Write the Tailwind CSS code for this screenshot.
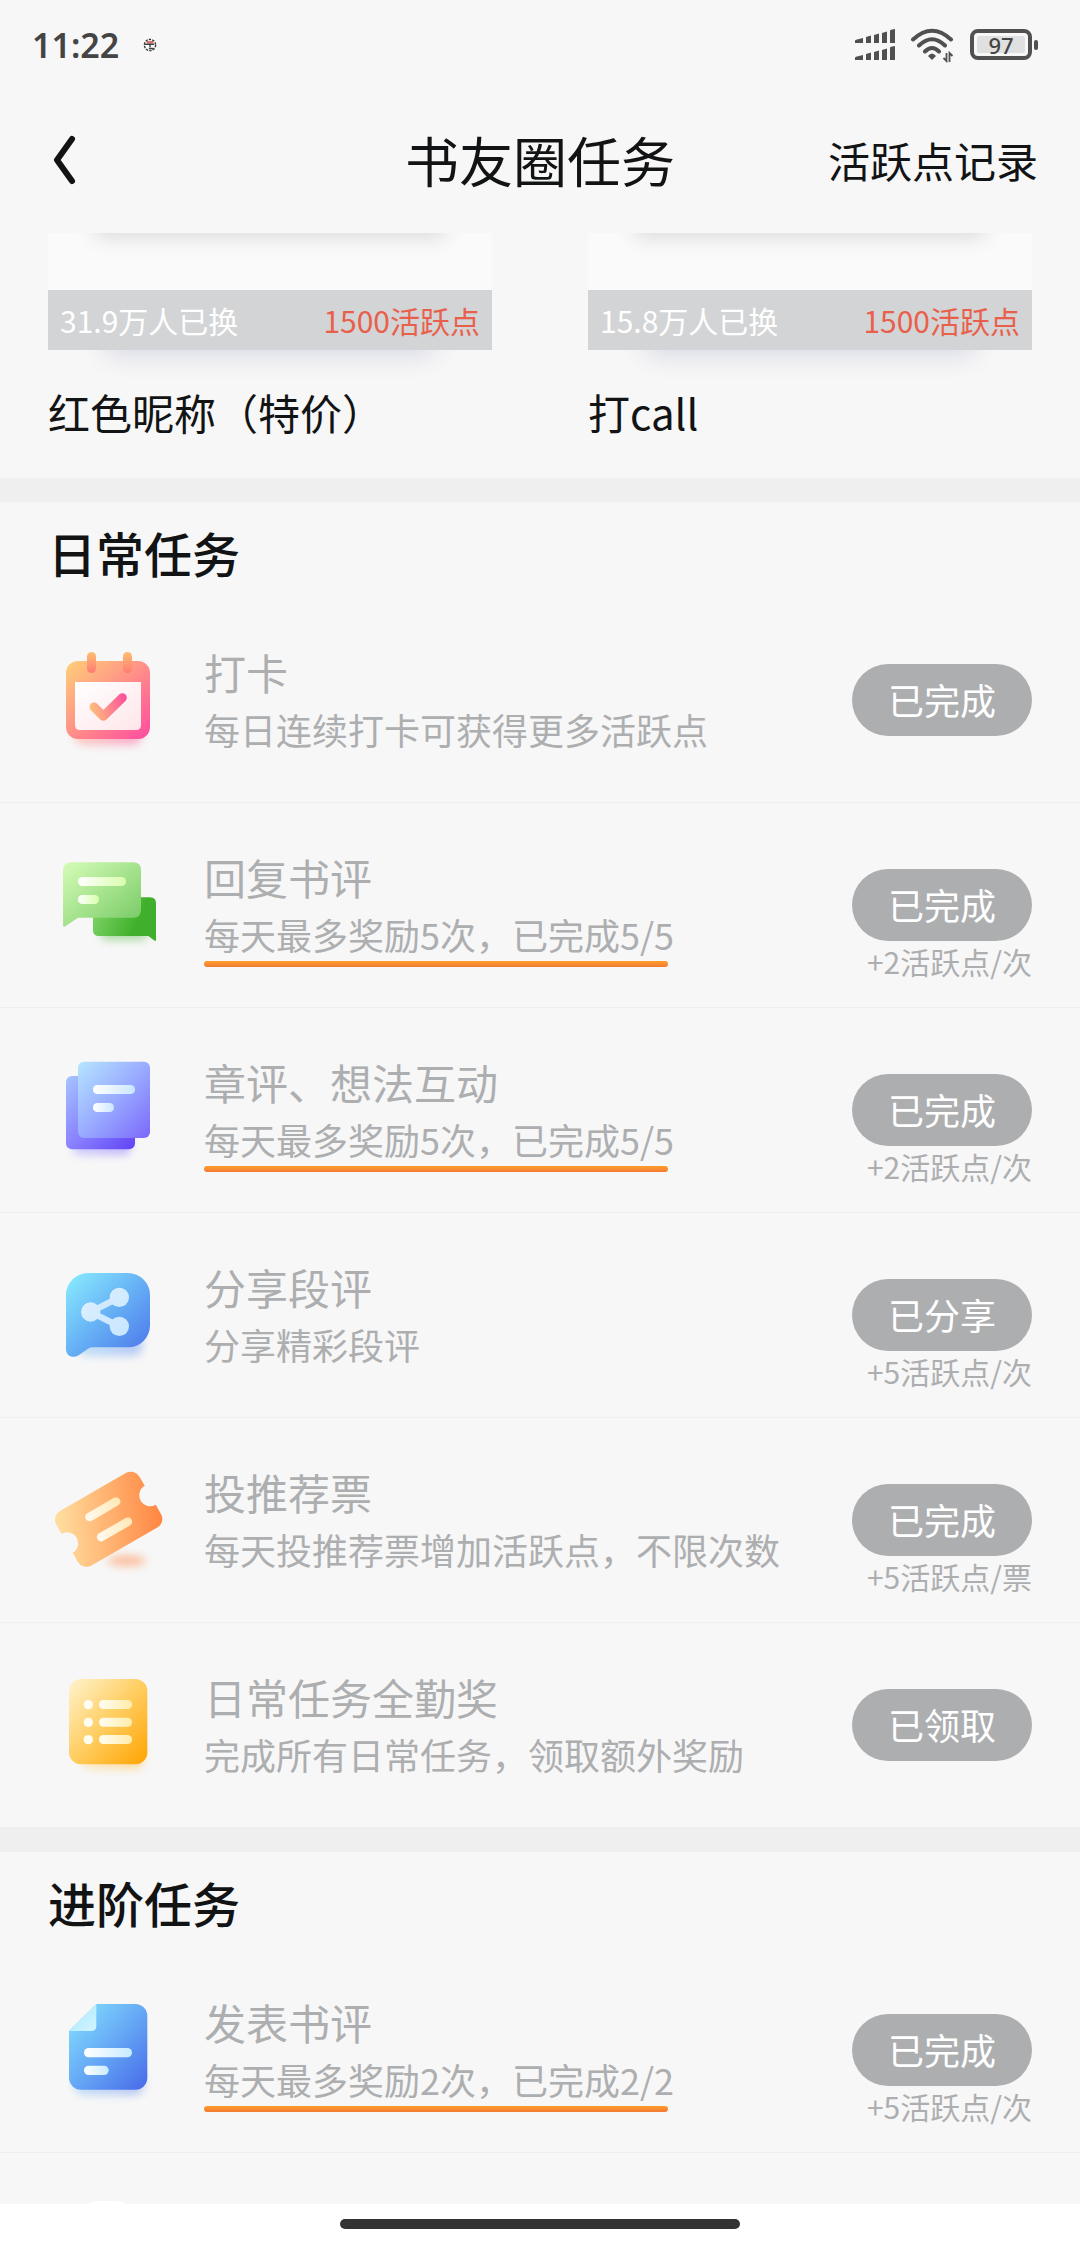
<!DOCTYPE html>
<html lang="zh-CN">
<head>
    <meta charset="UTF-8">
    <meta name="viewport" content="width=device-width, initial-scale=1.0">
    <title>书友圈任务</title>
    <script src="https://cdn.jsdelivr.net/npm/@tailwindcss/browser@4"></script>
</head>
<body class="h-screen flex flex-col overflow-hidden bg-[#f7f7f7] text-[#121314] font-['Noto_Sans_CJK_SC',sans-serif]">

    <!-- 状态栏 -->
    <div class="h-[89px] shrink-0 flex items-center justify-between pl-8 pr-[42px] text-[#444]">
        <div class="flex items-center gap-6">
            <span class="text-[34px] leading-none font-semibold font-['Noto_Sans',sans-serif]">11:22</span>
            <svg class="w-3.5 h-3.5" viewBox="0 0 12 12" aria-hidden="true">
                <circle cx="6" cy="6" r="4.800" fill="#fff" stroke="#333" stroke-width="1.200" stroke-dasharray="2 1"/>
                <path d="M3 2.500h6v3H3z" fill="#c77"/>
                <path d="M1.500 5.500h8M6 5v3M5 9h4" stroke="#344" stroke-width="1.200" fill="none"/>
            </svg>
        </div>
        <div class="flex items-center gap-4">
            <svg class="w-10 h-8" viewBox="0 0 40 32" fill="#505050" aria-hidden="true">
                <path id="sig" d="M0 12q0-1 1-1.300L8 9v5H0zM11 8l5-1.400V14h-5zM19 6l5-1.400V14h-5zM27 4l5-1.400V14h-5zM35 2q0-1 1-1.200L40 0v14h-5z"/>
                <use href="#sig" y="17"/>
            </svg>
            <svg class="w-[43px] h-9" viewBox="0 0 43 36" fill="none" stroke="#505050" stroke-width="4" aria-hidden="true">
                <path d="M2 12.500Q21 -5 40 12.500M8 18.500Q21 6 34 18.500M14 24.500Q21 17.500 28 24.500" stroke-linecap="round"/>
                <path d="M21 33l-4-4q4-5 8 0z" fill="#505050" stroke="none"/>
                <path d="M35.500 26v8l-3-3M38.500 35v-9l3 3" stroke-width="1.800"/>
            </svg>
            <div class="flex items-center gap-0.5">
                <div class="w-[62px] h-[31px] rounded-lg border-4 border-[#505050] p-[3px]">
                    <div class="h-full rounded-xs bg-[#e0e0e0] flex items-center justify-center text-[22px] leading-none font-medium font-['Noto_Sans',sans-serif]">97</div>
                </div>
                <div class="w-1 h-[10px] rounded-xs bg-[#505050]"></div>
            </div>
        </div>
    </div>

    <!-- 导航栏 -->
    <header class="h-36 shrink-0 grid grid-cols-[1fr_auto_1fr] items-center px-[42px] pb-0.5">
        <button class="justify-self-start pl-2.5" aria-label="返回">
            <svg class="w-6 h-[50px]" viewBox="0 0 24 50" fill="none" stroke="#121314" stroke-width="6" stroke-linecap="round" stroke-linejoin="round"><path d="M20 4L5 25L20 46"/></svg>
        </button>
        <h1 class="text-[54px] leading-[72px]">书友圈任务</h1>
        <a href="#" class="justify-self-end text-[42px] leading-[72px]">活跃点记录</a>
    </header>

    <main class="flex-1 min-h-0 overflow-hidden">

        <!-- 兑换商品 -->
        <section class="grid grid-cols-2 gap-24 px-12 h-[245px]">
            <div>
                <div class="relative">
                    <div class="absolute inset-x-14 bottom-0 h-8 rounded-xl shadow-[0_6px_24px_#d9dae6]"></div>
                    <div class="relative h-[57px] bg-[#fafafa] overflow-hidden">
                        <div class="absolute inset-x-12 -top-6 h-6 shadow-[0_4px_20px_#d9d9d9]"></div>
                    </div>
                    <div class="relative h-[60px] px-3 flex items-center justify-between bg-[#d3d4d5] text-[30px]">
                        <span class="text-white">31.9万人已换</span>
                        <span class="text-[#e8604c]">1500活跃点</span>
                    </div>
                </div>
                <h3 class="mt-8 text-[42px] leading-[60px] whitespace-nowrap">红色昵称（特价）</h3>
            </div>
            <div>
                <div class="relative">
                    <div class="absolute inset-x-14 bottom-0 h-8 rounded-xl shadow-[0_6px_24px_#d9dae6]"></div>
                    <div class="relative h-[57px] bg-[#fafafa] overflow-hidden">
                        <div class="absolute inset-x-12 -top-6 h-6 shadow-[0_4px_20px_#d9d9d9]"></div>
                    </div>
                    <div class="relative h-[60px] px-3 flex items-center justify-between bg-[#d3d4d5] text-[30px]">
                        <span class="text-white">15.8万人已换</span>
                        <span class="text-[#e8604c]">1500活跃点</span>
                    </div>
                </div>
                <h3 class="mt-8 text-[42px] leading-[60px] whitespace-nowrap">打call</h3>
            </div>
        </section>

        <!-- 日常任务 -->
        <section class="border-t-[24px] border-[#efefef]">
            <h2 class="h-24 px-12 pt-[14px] text-[48px] leading-[72px] font-medium">日常任务</h2>
            <ul class="text-[#adaeb0]">
                <li class="h-[205px] flex items-start border-b border-[#efefef] pl-[54px] pr-12">
                    <svg class="w-[108px] h-[108px] mt-12 mr-[42px] shrink-0 overflow-visible" viewBox="0 0 324 324" aria-hidden="true">
                        <defs>
                            <linearGradient id="cal" x1="0" y1="0" x2="1" y2="1"><stop offset="0" stop-color="#ffd078"/><stop offset=".5" stop-color="#ff8f88"/><stop offset="1" stop-color="#ff4aa0"/></linearGradient>
                            <linearGradient id="calTab" x1="0" y1="0" x2="0" y2="1"><stop offset="0" stop-color="#ffc070"/><stop offset="1" stop-color="#ff7a74"/></linearGradient>
                            <linearGradient id="calIn" x1="0" y1="0" x2="1" y2="1"><stop offset="0" stop-color="#fff"/><stop offset="1" stop-color="#ffe6ea"/></linearGradient>
                            <linearGradient id="calCheck" gradientUnits="userSpaceOnUse" x1="106" y1="190" x2="215" y2="160"><stop offset="0" stop-color="#ffc27a"/><stop offset="1" stop-color="#fb529c"/></linearGradient>
                            <filter id="soft" x="-30%" y="-80%" width="160%" height="260%"><feGaussianBlur stdDeviation="13"/></filter>
                        </defs>
                        <rect x="60" y="220" width="204" height="76" rx="30" fill="url(#cal)" opacity=".5" filter="url(#soft)"/>
                        <rect x="36" y="45" width="252" height="234" rx="36" fill="url(#cal)"/>
                        <path d="M63 108H261V237Q261 252 246 252H78Q63 252 63 237Z" fill="url(#calIn)"/>
                        <rect x="99" y="18" width="27" height="63" rx="13" fill="url(#calTab)"/>
                        <rect x="207" y="18" width="27" height="63" rx="13" fill="url(#calTab)"/>
                        <path d="M120 183L148 211L205 155" fill="none" stroke="url(#calCheck)" stroke-width="27" stroke-linecap="round" stroke-linejoin="round"/>
                    </svg>
                    <div class="flex-1 pt-11">
                        <h3 class="text-[42px] leading-[60px]">打卡</h3>
                        <p class="text-[36px] leading-[54px]">每日连续打卡可获得更多活跃点</p>
                    </div>
                    <div class="pt-[66px] flex flex-col items-end">
                        <button class="w-[180px] h-[72px] rounded-full bg-[#adaeb0] text-white text-[36px] leading-none pb-0.5">已完成</button>
                    </div>
                </li>
                <li class="h-[205px] flex items-start border-b border-[#efefef] pl-[54px] pr-12">
                    <svg class="w-[108px] h-[108px] mt-12 mr-[42px] shrink-0 overflow-visible" viewBox="0 0 324 324" aria-hidden="true">
                        <defs>
                            <linearGradient id="chatA" x1="0" y1="0" x2="1" y2="1"><stop offset="0" stop-color="#d6fdb8"/><stop offset="1" stop-color="#74c862"/></linearGradient>
                            <linearGradient id="chatB" x1="0" y1="0" x2="1" y2=".3"><stop offset="0" stop-color="#86d76c"/><stop offset=".8" stop-color="#40b02c"/></linearGradient>
                            <linearGradient id="chatL"><stop offset="0" stop-color="#fff"/><stop offset="1" stop-color="#d8ffac"/></linearGradient>
                        </defs>
                        <rect x="140" y="210" width="140" height="58" rx="20" fill="#40b02c" opacity=".4" filter="url(#soft)"/>
                        <path d="M135 139H288Q306 139 306 157V268Q305 272 300 268L283 255H135Q117 255 117 237V157Q117 139 135 139Z" fill="url(#chatB)"/>
                        <path d="M51 34H237Q261 34 261 58V176Q261 200 237 200H72L34 226Q27 230 27 222V58Q27 34 51 34Z" fill="url(#chatA)"/>
                        <rect x="72" y="78" width="144" height="27" rx="13" fill="url(#chatL)"/>
                        <rect x="72" y="132" width="63" height="27" rx="13" fill="url(#chatL)"/>
                    </svg>
                    <div class="flex-1 pt-11">
                        <h3 class="text-[42px] leading-[60px]">回复书评</h3>
                        <p class="text-[36px] leading-[54px]">每天最多奖励5次，已完成5/5</p>
                        <div class="w-[464px] h-1.5 rounded-full bg-linear-to-b from-[#ff9e2b] to-[#f37a33]"></div>
                    </div>
                    <div class="pt-[66px] flex flex-col items-end">
                        <button class="w-[180px] h-[72px] rounded-full bg-[#adaeb0] text-white text-[36px] leading-none pb-0.5">已完成</button>
                        <span class="text-[30px] leading-10">+2活跃点/次</span>
                    </div>
                </li>
                <li class="h-[205px] flex items-start border-b border-[#efefef] pl-[54px] pr-12">
                    <svg class="w-[108px] h-[108px] mt-12 mr-[42px] shrink-0 overflow-visible" viewBox="0 0 324 324" aria-hidden="true">
                        <defs>
                            <linearGradient id="noteA" x1="0" y1="0" x2="1" y2="1"><stop offset="0" stop-color="#b5e6ff"/><stop offset=".5" stop-color="#99abff"/><stop offset="1" stop-color="#7b68fb"/></linearGradient>
                            <linearGradient id="noteB" x1="0" y1="0" x2="1" y2="1"><stop offset="0" stop-color="#a5c5ff"/><stop offset=".5" stop-color="#8a82ff"/><stop offset="1" stop-color="#6142f6"/></linearGradient>
                            <linearGradient id="noteL"><stop offset="0" stop-color="#fff"/><stop offset="1" stop-color="#cbe6ff"/></linearGradient>
                        </defs>
                        <rect x="55" y="220" width="175" height="76" rx="20" fill="url(#noteB)" opacity=".4" filter="url(#soft)"/>
                        <rect x="36" y="60" width="207" height="220" rx="18" fill="url(#noteB)"/>
                        <rect x="72" y="17" width="216" height="229" rx="18" fill="url(#noteA)"/>
                        <rect x="117" y="87" width="126" height="27" rx="13" fill="url(#noteL)"/>
                        <rect x="117" y="141" width="63" height="27" rx="13" fill="url(#noteL)"/>
                    </svg>
                    <div class="flex-1 pt-11">
                        <h3 class="text-[42px] leading-[60px]">章评、想法互动</h3>
                        <p class="text-[36px] leading-[54px]">每天最多奖励5次，已完成5/5</p>
                        <div class="w-[464px] h-1.5 rounded-full bg-linear-to-b from-[#ff9e2b] to-[#f37a33]"></div>
                    </div>
                    <div class="pt-[66px] flex flex-col items-end">
                        <button class="w-[180px] h-[72px] rounded-full bg-[#adaeb0] text-white text-[36px] leading-none pb-0.5">已完成</button>
                        <span class="text-[30px] leading-10">+2活跃点/次</span>
                    </div>
                </li>
                <li class="h-[205px] flex items-start border-b border-[#efefef] pl-[54px] pr-12">
                    <svg class="w-[108px] h-[108px] mt-12 mr-[42px] shrink-0 overflow-visible" viewBox="0 0 324 324" aria-hidden="true">
                        <defs>
                            <linearGradient id="share" x1="0" y1="0" x2="1" y2="1"><stop offset="0" stop-color="#8aeeff"/><stop offset=".5" stop-color="#66b0f5"/><stop offset="1" stop-color="#4a72ea"/></linearGradient>
                            <linearGradient id="shareN" gradientUnits="userSpaceOnUse" x1="80" y1="80" x2="220" y2="220"><stop offset="0" stop-color="#dff1ff"/><stop offset="1" stop-color="#c8e6ff"/></linearGradient>
                        </defs>
                        <rect x="66" y="210" width="200" height="74" rx="30" fill="url(#share)" opacity=".4" filter="url(#soft)"/>
                        <path d="M102 36H222A66 66 0 0 1 288 102V193A66 66 0 0 1 222 259H118Q108 259 102 263L75 282Q60 292 46 284Q36 278 36 265V102A66 66 0 0 1 102 36Z" fill="url(#share)"/>
                        <path d="M196 109L110 153L196 196" fill="none" stroke="#cfe9ff" stroke-width="19"/>
                        <g fill="url(#shareN)">
                            <circle cx="110" cy="153" r="29"/><circle cx="196" cy="109" r="29"/><circle cx="196" cy="196" r="29"/>
                        </g>
                    </svg>
                    <div class="flex-1 pt-11">
                        <h3 class="text-[42px] leading-[60px]">分享段评</h3>
                        <p class="text-[36px] leading-[54px]">分享精彩段评</p>
                    </div>
                    <div class="pt-[66px] flex flex-col items-end">
                        <button class="w-[180px] h-[72px] rounded-full bg-[#adaeb0] text-white text-[36px] leading-none pb-0.5">已分享</button>
                        <span class="text-[30px] leading-10">+5活跃点/次</span>
                    </div>
                </li>
                <li class="h-[205px] flex items-start border-b border-[#efefef] pl-[54px] pr-12">
                    <svg class="w-[108px] h-[108px] mt-12 mr-[42px] shrink-0 overflow-visible" viewBox="0 0 324 324" aria-hidden="true">
                        <defs>
                            <linearGradient id="tick" gradientUnits="userSpaceOnUse" x1="-140" y1="-60" x2="140" y2="70"><stop offset="0" stop-color="#ffdd9e"/><stop offset="1" stop-color="#ff8743"/></linearGradient>
                            <linearGradient id="tickL"><stop offset="0" stop-color="#fffaf0"/><stop offset="1" stop-color="#ffe8b5"/></linearGradient>
                        </defs>
                        <ellipse cx="218" cy="284" rx="58" ry="16" fill="#ff8743" opacity=".5" filter="url(#soft)"/>
                        <g transform="translate(164 160) rotate(-30)">
                            <path d="M-114-94.500H114A30 30 0 0 1 144-64.500V-33A33 33 0 0 0 144 33V64.500A30 30 0 0 1 114 94.500H-114A30 30 0 0 1-144 64.500V33A33 33 0 0 0-144-33V-64.500A30 30 0 0 1-114-94.500Z" fill="url(#tick)"/>
                            <rect x="-59" y="-48" width="118" height="26" rx="13" fill="url(#tickL)"/>
                            <rect x="-59" y="22" width="118" height="26" rx="13" fill="url(#tickL)"/>
                        </g>
                    </svg>
                    <div class="flex-1 pt-11">
                        <h3 class="text-[42px] leading-[60px]">投推荐票</h3>
                        <p class="text-[36px] leading-[54px]">每天投推荐票增加活跃点，不限次数</p>
                    </div>
                    <div class="pt-[66px] flex flex-col items-end">
                        <button class="w-[180px] h-[72px] rounded-full bg-[#adaeb0] text-white text-[36px] leading-none pb-0.5">已完成</button>
                        <span class="text-[30px] leading-10">+5活跃点/票</span>
                    </div>
                </li>
                <li class="h-[204px] flex items-start pl-[54px] pr-12">
                    <svg class="w-[108px] h-[108px] mt-12 mr-[42px] shrink-0 overflow-visible" viewBox="0 0 324 324" aria-hidden="true">
                        <defs>
                            <linearGradient id="list" x1="0" y1="0" x2="1" y2="1"><stop offset="0" stop-color="#fff4cf"/><stop offset=".5" stop-color="#ffcd60"/><stop offset="1" stop-color="#ffa300"/></linearGradient>
                            <linearGradient id="listL"><stop offset="0" stop-color="#fffdf2"/><stop offset="1" stop-color="#ffedab"/></linearGradient>
                        </defs>
                        <rect x="80" y="220" width="190" height="74" rx="30" fill="url(#list)" opacity=".4" filter="url(#soft)"/>
                        <rect x="45" y="24" width="235" height="256" rx="36" fill="url(#list)"/>
                        <circle cx="103" cy="101" r="14" fill="#fffdf2"/><circle cx="103" cy="154" r="14" fill="#fffdf2"/><circle cx="103" cy="206" r="14" fill="#fffdf2"/>
                        <rect x="135" y="87" width="99" height="27" rx="13" fill="url(#listL)"/>
                        <rect x="135" y="140" width="99" height="27" rx="13" fill="url(#listL)"/>
                        <rect x="135" y="192" width="99" height="27" rx="13" fill="url(#listL)"/>
                    </svg>
                    <div class="flex-1 pt-11">
                        <h3 class="text-[42px] leading-[60px]">日常任务全勤奖</h3>
                        <p class="text-[36px] leading-[54px]">完成所有日常任务，领取额外奖励</p>
                    </div>
                    <div class="pt-[66px] flex flex-col items-end">
                        <button class="w-[180px] h-[72px] rounded-full bg-[#adaeb0] text-white text-[36px] leading-none pb-0.5">已领取</button>
                    </div>
                </li>
            </ul>
        </section>

        <!-- 进阶任务 -->
        <section class="border-t-[25px] border-[#efefef]">
            <h2 class="h-24 px-12 pt-[14px] text-[48px] leading-[72px] font-medium">进阶任务</h2>
            <ul class="text-[#adaeb0]">
                <li class="h-[205px] flex items-start border-b border-[#efefef] pl-[54px] pr-12">
                    <svg class="w-[108px] h-[108px] mt-12 mr-[42px] shrink-0 overflow-visible" viewBox="0 0 324 324" aria-hidden="true">
                        <defs>
                            <linearGradient id="doc" x1="0" y1="0" x2="1" y2="1"><stop offset="0" stop-color="#86e4ff"/><stop offset=".5" stop-color="#66a9f5"/><stop offset="1" stop-color="#4769e9"/></linearGradient>
                            <linearGradient id="docF" x1="0" y1="0" x2="1" y2="1"><stop offset="0" stop-color="#a5e6ff"/><stop offset="1" stop-color="#d3f5ff"/></linearGradient>
                            <linearGradient id="docL"><stop offset="0" stop-color="#fff"/><stop offset="1" stop-color="#c8ebff"/></linearGradient>
                        </defs>
                        <rect x="60" y="220" width="210" height="76" rx="30" fill="url(#doc)" opacity=".4" filter="url(#soft)"/>
                        <path d="M127 24H244A36 36 0 0 1 280 60V245A36 36 0 0 1 244 281H81A36 36 0 0 1 45 245V105Z" fill="url(#doc)"/>
                        <path d="M127 24V89Q127 105 111 105H45Z" fill="url(#docF)"/>
                        <rect x="90" y="156" width="144" height="28" rx="14" fill="url(#docL)"/>
                        <rect x="90" y="209" width="74" height="28" rx="14" fill="url(#docL)"/>
                    </svg>
                    <div class="flex-1 pt-11">
                        <h3 class="text-[42px] leading-[60px]">发表书评</h3>
                        <p class="text-[36px] leading-[54px]">每天最多奖励2次，已完成2/2</p>
                        <div class="w-[464px] h-1.5 rounded-full bg-linear-to-b from-[#ff9e2b] to-[#f37a33]"></div>
                    </div>
                    <div class="pt-[66px] flex flex-col items-end">
                        <button class="w-[180px] h-[72px] rounded-full bg-[#adaeb0] text-white text-[36px] leading-none pb-0.5">已完成</button>
                        <span class="text-[30px] leading-10">+5活跃点/次</span>
                    </div>
                </li>
                <li class="h-[205px] flex items-start pl-[54px] pr-12">
                    <svg class="w-[108px] h-[108px] mt-12 shrink-0" viewBox="0 0 324 324" aria-hidden="true">
                        <ellipse cx="159" cy="84" rx="126" ry="86" fill="#fff"/>
                    </svg>
                </li>
            </ul>
        </section>
    </main>

    <!-- 手势条 -->
    <div class="h-11 shrink-0 bg-white flex justify-center pt-[15px]">
        <div class="w-[400px] h-[10px] rounded-full bg-[#333]"></div>
    </div>

</body>
</html>
